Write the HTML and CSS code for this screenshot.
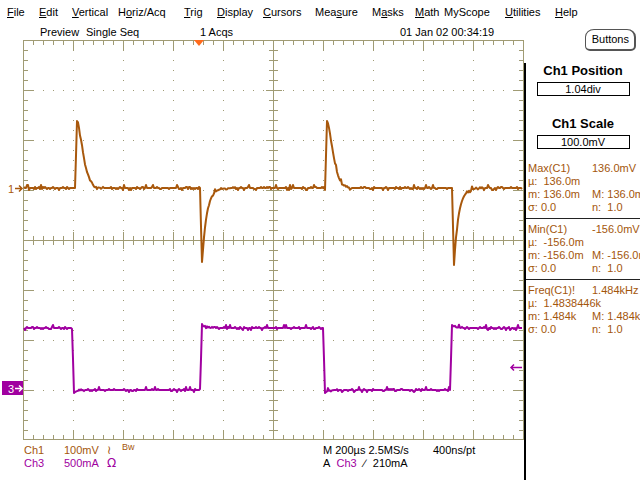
FILE: index.html
```html
<!DOCTYPE html>
<html lang="en">
<head>
    <meta charset="UTF-8">
    <title>Scope</title>
    <link rel="stylesheet" href="styles.css">
</head>
<body>
    <div class="menubar">
        <span><u>F</u>ile</span>
        <span><u>E</u>dit</span>
        <span><u>V</u>ertical</span>
        <span>H<u>o</u>riz/Acq</span>
        <span><u>T</u>rig</span>
        <span><u>D</u>isplay</span>
        <span><u>C</u>ursors</span>
        <span>Mea<u>s</u>ure</span>
        <span>M<u>a</u>sks</span>
        <span><u>M</u>ath</span>
        <span>MyScope</span>
        <span><u>U</u>tilities</span>
        <span><u>H</u>elp</span>
    </div>

    <div class="main">
        <div class="scope-col">
            <div class="status">
                <span>Preview</span>
                <span>Single Seq</span>
                <span>1 Acqs</span>
                <span>01 Jan 02 00:34:19</span>
            </div>

            <svg class="scope" width="524" height="400" viewBox="0 40 524 400">
                <path id="grat" class="grat" d=""/>
                <polygon class="trig-pos" points="194,40 204,40 199,46"/>
                <path id="ch1" class="trace ch1" d=""/>
                <path id="ch3" class="trace ch3" d=""/>

                <!-- channel ground markers -->
                <text class="mark ch1-fill" x="8" y="193">1</text>
                <path class="ch1-line" d="M15 188.5 H22 M19 185.5 L22 188.5 L19 191.5"/>
                <rect class="ch3-fill" x="2" y="381" width="21" height="14"/>
                <text class="mark white" x="8" y="393">3</text>
                <path class="white-line" d="M15 388.5 H22 M19 385.5 L22 388.5 L19 391.5"/>

                <!-- trigger level -->
                <path class="ch3-line" d="M511 367.5 H522 M514 364.5 L511 367.5 L514 370.5"/>
            </svg>

            <div class="readout">
                <div class="readout-row">
                    <span class="c1">Ch1</span>
                    <span class="c1">100mV</span>
                    <span class="c1 sym">&#8768;</span>
                    <span class="c1 bw">Bw</span>
                    <span>M 200&micro;s 2.5MS/s</span>
                    <span>400ns/pt</span>
                </div>
                <div class="readout-row">
                    <span class="c3">Ch3</span>
                    <span class="c3">500mA</span>
                    <span class="c3 sym">&Omega;</span>
                    <span></span>
                    <span>A&nbsp; <span class="c3">Ch3</span>&nbsp;<span class="slope">&#8725;</span> 210mA</span>
                    <span></span>
                </div>
            </div>
        </div>

        <div class="side-col">
            <div class="btn-row">
                <span class="buttons-btn">Buttons</span>
            </div>
            <div class="panel">
                <div class="panel-title first">Ch1 Position</div>
                <div class="value-box">1.04div</div>
                <div class="panel-title">Ch1 Scale</div>
                <div class="value-box">100.0mV</div>

                <div class="meas">
                    <div class="meas-row"><span>Max(C1)</span><span>136.0mV</span></div>
                    <div class="meas-row"><span>&micro;: &nbsp;136.0m</span></div>
                    <div class="meas-row"><span>m: 136.0m</span><span>M: 136.0m</span></div>
                    <div class="meas-row"><span>&sigma;: 0.0</span><span>n: &nbsp;1.0</span></div>
                </div>
                <div class="meas">
                    <div class="meas-row"><span>Min(C1)</span><span>-156.0mV</span></div>
                    <div class="meas-row"><span>&micro;: &nbsp;-156.0m</span></div>
                    <div class="meas-row"><span>m: -156.0m</span><span>M: -156.0m</span></div>
                    <div class="meas-row"><span>&sigma;: 0.0</span><span>n: &nbsp;1.0</span></div>
                </div>
                <div class="meas last">
                    <div class="meas-row"><span>Freq(C1)!</span><span>1.484kHz</span></div>
                    <div class="meas-row"><span>&micro;: &nbsp;1.4838446k</span></div>
                    <div class="meas-row"><span>m: 1.484k</span><span>M: 1.484k</span></div>
                    <div class="meas-row"><span>&sigma;: 0.0</span><span>n: &nbsp;1.0</span></div>
                </div>
            </div>
        </div>
    </div>

    <script>
        // graticule: 10 x 8 divisions of 50px, top-left at (23, 40)
        var X0 = 23, Y0 = 40, W = 500, H = 400, DIV = 50;
        var d = [];

        function seg(x1, y1, x2, y2) {
            d.push('M' + x1 + ' ' + y1 + 'L' + x2 + ' ' + y2);
        }
        function dot(x, y) {
            d.push('M' + x + ' ' + (y + 0.5) + 'h1');
        }

        // frame and centre cross
        seg(X0 + 0.5, Y0 + 0.5, X0 + W + 0.5, Y0 + 0.5);
        seg(X0 + 0.5, Y0 + H - 0.5, X0 + W + 0.5, Y0 + H - 0.5);
        seg(X0 + 0.5, Y0, X0 + 0.5, Y0 + H);
        seg(X0 + W + 0.5, Y0, X0 + W + 0.5, Y0 + H);
        seg(X0 + W / 2 + 0.5, Y0, X0 + W / 2 + 0.5, Y0 + H);
        seg(X0, Y0 + H / 2 + 0.5, X0 + W, Y0 + H / 2 + 0.5);

        // vertical ticks and dotted division lines
        for (var x = X0 + 10; x < X0 + W; x += 10) {
            var major = (x - X0) % DIV === 0;
            var t = major ? 9 : 4;
            seg(x + 0.5, Y0, x + 0.5, Y0 + t + 1);
            seg(x + 0.5, Y0 + H - t - 1, x + 0.5, Y0 + H);
            seg(x + 0.5, Y0 + H / 2 - (major ? 8 : 4), x + 0.5, Y0 + H / 2 + (major ? 9 : 5));
            if (major && x !== X0 + W / 2) {
                for (var y = Y0 + 10; y < Y0 + H; y += 10) dot(x, y);
            }
        }
        for (var y = Y0 + 10; y < Y0 + H; y += 10) {
            var major = (y - Y0) % DIV === 0;
            var t = major ? 9 : 4;
            seg(X0, y + 0.5, X0 + t + 1, y + 0.5);
            seg(X0 + W - t, y + 0.5, X0 + W + 1, y + 0.5);
            seg(X0 + W / 2 - (major ? 7 : 4), y + 0.5, X0 + W / 2 + (major ? 9 : 5), y + 0.5);
            if (major && y !== Y0 + H / 2) {
                for (var x = X0 + 10; x < X0 + W; x += 10) dot(x, y);
            }
        }
        document.getElementById('grat').setAttribute('d', d.join(''));

        // simple repeatable noise
        var seed = 12345;
        function rnd() {
            seed = (seed * 16807) % 2147483647;
            return seed / 2147483647;
        }
        function noise() {
            var r = rnd();
            if (r < 0.04) return -3;
            if (r < 0.08) return 2;
            if (r < 0.22) return -1;
            if (r < 0.34) return 1;
            return 0;
        }

        function ch1(x) {
            var y = 188;
            [75, 325].forEach(function (e) {
                var k = x - e;
                if (k >= 0 && k < 2) y -= 67 * k / 2;
                else if (k >= 2) y -= 67 * Math.exp(-Math.pow((k - 2) / 8, 1.6));
            });
            [200, 452].forEach(function (e) {
                var k = x - e;
                if (k >= 0 && k < 2) y += 77 * k / 2;
                else if (k >= 2) y += 77 * Math.exp(-(k - 2) / 4.5);
            });
            return y;
        }

        function ch3(x) {
            var y = 328;
            [[73, 1], [201, -1], [324, 1], [451, -1]].forEach(function (e) {
                var k = x - e[0];
                if (k > -1) {
                    var f = k >= 1 ? 1 : (k + 1) / 2;
                    y += e[1] * 62 * f;
                    if (k >= 1) y += e[1] * 3 * Math.exp(-(k - 1) / 3);
                }
            });
            return y;
        }

        function trace(id, fn) {
            var pts = [];
            for (var x = 24; x <= 522; x++) {
                pts.push(x + ' ' + (fn(x) + noise()).toFixed(1));
            }
            document.getElementById(id).setAttribute('d', 'M' + pts.join('L'));
        }
        trace('ch1', ch1);
        trace('ch3', ch3);
    </script>
</body>
</html>
```

FILE: styles.css
```css
body {
    margin: 0;
    background-color: white;
    font-family: "Liberation Sans", Arial, sans-serif;
    font-size: 11px;
    color: black;
    width: 640px;
    height: 480px;
    overflow: hidden;
}

.menubar {
    display: grid;
    grid-template-columns: 32px 33px 46px 66px 33px 46px 52px 57px 43px 29px 61px 50px auto;
    height: 22px;
    line-height: 24px;
    padding-left: 7px;
}

.menubar u {
    text-decoration-thickness: 1px;
    text-underline-offset: 1px;
}

.main {
    display: flex;
}

.scope-col {
    width: 524px;
}

.status {
    display: grid;
    grid-template-columns: 46px 114px 200px auto;
    height: 18px;
    line-height: 21px;
    padding-left: 40px;
}

.scope {
    display: block;
}

.grat {
    fill: none;
    stroke: #a09b74;
    stroke-width: 1;
    shape-rendering: crispEdges;
}

.trig-pos {
    fill: #ff6a1c;
}

.trace {
    fill: none;
    stroke-width: 2;
    stroke-linejoin: round;
}

.trace.ch1 {
    stroke: #a8580c;
}

.trace.ch3 {
    stroke: #a000a0;
}

.mark {
    font-family: "Liberation Sans", Arial, sans-serif;
    font-size: 11px;
}

.ch1-fill {
    fill: #a8580c;
}

.ch3-fill {
    fill: #a000a0;
}

.white {
    fill: white;
}

.ch1-line,
.ch3-line,
.white-line {
    fill: none;
    stroke-width: 1.5;
}

.ch1-line {
    stroke: #a8580c;
}

.ch3-line {
    stroke: #a000a0;
}

.white-line {
    stroke: white;
}

.readout {
    padding-top: 4px;
}

.readout-row {
    display: grid;
    grid-template-columns: 40px 43px 15px 201px 110px auto;
    height: 13px;
    line-height: 13px;
    padding-left: 24px;
}

.c1 {
    color: #a3560c;
}

.c3 {
    color: #a000a0;
}

.sym {
    font-family: "DejaVu Sans", sans-serif;
    font-size: 12px;
}

.bw {
    font-size: 9px;
    line-height: 9px;
    margin-top: -1px;
}

.slope {
    display: inline-block;
    width: 10px;
    text-align: center;
}

.side-col {
    width: 116px;
}

.btn-row {
    height: 18px;
    display: flex;
    justify-content: flex-end;
    padding-right: 4px;
}

.buttons-btn {
    margin-top: 7px;
    height: 19px;
    line-height: 19px;
    padding: 0 5px 0 6px;
    border: 1px solid #555;
    border-right-width: 2px;
    border-bottom-width: 2px;
    border-radius: 9px 9px 5px 5px / 8px 8px 5px 5px;
    background-color: white;
    position: relative;
}

.panel {
    height: 440px;
    border-left: 2px solid black;
    box-sizing: border-box;
}

.panel-title {
    font-weight: bold;
    font-size: 13px;
    text-align: center;
    line-height: 16px;
    margin-top: 20px;
}

.panel-title.first {
    margin-top: 23px;
}

.value-box {
    width: 91px;
    height: 12px;
    margin: 3px auto 0;
    border: 1px solid black;
    text-align: center;
    line-height: 13px;
}

.meas {
    margin-top: 9px;
    padding: 4px 0 4px 2px;
    border-bottom: 1px solid #222;
    color: #a3560c;
}

.meas + .meas {
    margin-top: 0;
}

.meas.last {
    border-bottom: none;
}

.meas-row {
    display: grid;
    grid-template-columns: 64px auto;
    height: 13px;
    line-height: 13px;
    white-space: nowrap;
    overflow: hidden;
}
```
